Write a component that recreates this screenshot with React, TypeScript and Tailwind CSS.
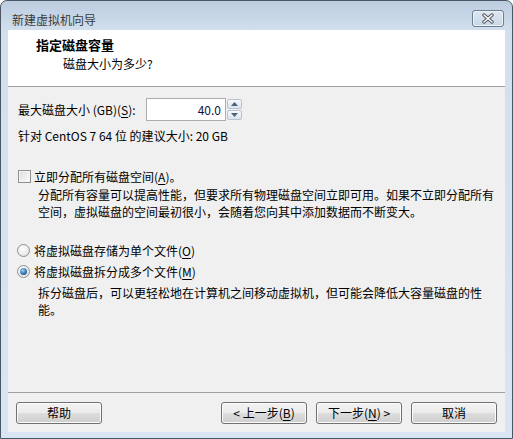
import React from "react";

const FONT = { fontFamily: '"Noto Sans CJK SC", "Noto Sans", sans-serif' };

function Key({ k }: { k: string }) {
  return (
    <>
      (<span className="underline underline-offset-2">{k}</span>)
    </>
  );
}

function WinButton({ children }: { children: React.ReactNode }) {
  return (
    <button
      type="button"
      className="w-[86px] h-[22px] rounded-[3px] border border-[#707070] bg-[linear-gradient(#f2f2f2_0%,#ebebeb_50%,#dddddd_50%,#cfcfcf_100%)] text-[12px] leading-none text-black flex items-center justify-center shadow-[inset_0_0_0_1px_#fcfcfc]"
    >
      {children}
    </button>
  );
}

function CloseButton() {
  return (
    <div className="w-[32px] h-[17px] rounded-[3px] border border-[#6d7f93] bg-[linear-gradient(#dfe8f2,#c8d6e6)] shadow-[inset_0_0_0_1px_#eef3f8] flex items-center justify-center">
      <svg width="14" height="11" viewBox="0 0 14 11">
        <path d="M3 2 L11 9 M11 2 L3 9" stroke="#4a4f55" strokeWidth="3.4" strokeLinecap="round" />
        <path d="M3 2 L11 9 M11 2 L3 9" stroke="#ffffff" strokeWidth="1.6" strokeLinecap="round" />
      </svg>
    </div>
  );
}

function SpinArrow({ up }: { up?: boolean }) {
  return (
    <div className="flex-1 flex items-center justify-center border border-[#b7c3cf] rounded-[2px] bg-[linear-gradient(#f6f8fa,#dde3ea)]">
      <svg width="7" height="4" viewBox="0 0 7 4">
        <path d={up ? "M0 4 L3.5 0 L7 4 Z" : "M0 0 L3.5 4 L7 0 Z"} fill="#4d6185" />
      </svg>
    </div>
  );
}

function Radio({ checked }: { checked?: boolean }) {
  return (
    <div className="w-[13px] h-[13px] rounded-full border border-[#8f8f8f] bg-[radial-gradient(circle_at_40%_35%,#ffffff,#dcdcdc)] flex items-center justify-center">
      {checked && (
        <div className="w-[7px] h-[7px] rounded-full bg-[radial-gradient(circle_at_40%_35%,#9fd0f5,#1d5d9b_70%,#0e3f70)]" />
      )}
    </div>
  );
}

export default function App() {
  return (
    <div style={FONT} className="w-[513px] h-[439px] bg-white text-[12px] text-black">
      <div className="w-full h-full border border-[#4b5766] rounded-t-[7px] bg-[linear-gradient(#bccde0_0px,#d2dfed_30px,#d9e5f2_100%)] flex flex-col">
        {/* title bar */}
        <div className="h-[29px] flex items-start justify-between pl-[11px] pr-[8px]">
          <span className="mt-[10px] text-[12px] leading-[17px] text-[#3a3a3a]">新建虚拟机向导</span>
          <div className="mt-[9px]">
            <CloseButton />
          </div>
        </div>

        {/* client */}
        <div className="mx-[7px] flex-1 bg-[#f0f0f0] flex flex-col">
          <div className="h-[57px] bg-white border-b border-[#a0a0a0] pl-[28px] pt-[6px]">
            <div className="font-bold text-[13px] leading-[17px]">指定磁盘容量</div>
            <div className="mt-[2px] pl-[27px] leading-[17px]">磁盘大小为多少?</div>
          </div>

          <div className="flex-1 pl-[10px] pt-[11px] flex flex-col">
            <div className="flex items-center h-[23px]">
              <span className="leading-[17px] w-[128px]">
                最大磁盘大小 (GB)<Key k="S" />:
              </span>
              <div className="w-[80px] h-[23px] border border-[#abadb3] bg-white flex items-center justify-end pr-[4px] text-[#101040]">
                40.0
              </div>
              <div className="w-[16px] h-[23px] flex flex-col gap-[1px] py-[1px] pl-[1px]">
                <SpinArrow up />
                <SpinArrow />
              </div>
            </div>

            <div className="mt-[6px] leading-[17px]">针对 CentOS 7 64 位 的建议大小: 20 GB</div>

            <div className="mt-[24px] flex items-center h-[17px]">
              <div className="w-[13px] h-[13px] border border-[#8f8f8f] bg-[linear-gradient(135deg,#dcdcdc,#fdfdfd)] shadow-[inset_0_0_0_1px_#f4f4f4]" />
              <span className="ml-[3px] leading-[17px]">
                立即分配所有磁盘空间<Key k="A" />。
              </span>
            </div>
            <div className="mt-[1px] pl-[20px] leading-[17px] w-[490px]">
              分配所有容量可以提高性能，但要求所有物理磁盘空间立即可用。如果不立即分配所有
              <br />
              空间，虚拟磁盘的空间最初很小，会随着您向其中添加数据而不断变大。
            </div>

            <div className="mt-[22px] flex items-center h-[17px] -ml-[1px]">
              <Radio />
              <span className="ml-[4px] leading-[17px]">
                将虚拟磁盘存储为单个文件<Key k="O" />
              </span>
            </div>
            <div className="mt-[4px] flex items-center h-[17px] -ml-[1px]">
              <Radio checked />
              <span className="ml-[4px] leading-[17px]">
                将虚拟磁盘拆分成多个文件<Key k="M" />
              </span>
            </div>
            <div className="mt-[4px] pl-[20px] leading-[17px]">
              拆分磁盘后，可以更轻松地在计算机之间移动虚拟机，但可能会降低大容量磁盘的性
              <br />
              能。
            </div>
          </div>

          <div className="border-t border-[#a0a0a0] pt-[9px] pb-[8px] px-[8px] flex items-center">
            <WinButton>帮助</WinButton>
            <div className="flex-1" />
            <div className="flex gap-[9px]">
              <WinButton>
                &lt; 上一步<Key k="B" />
              </WinButton>
              <WinButton>
                下一步<Key k="N" /> &gt;
              </WinButton>
              <WinButton>取消</WinButton>
            </div>
          </div>
        </div>
        <div className="h-[6px]" />
      </div>
    </div>
  );
}
